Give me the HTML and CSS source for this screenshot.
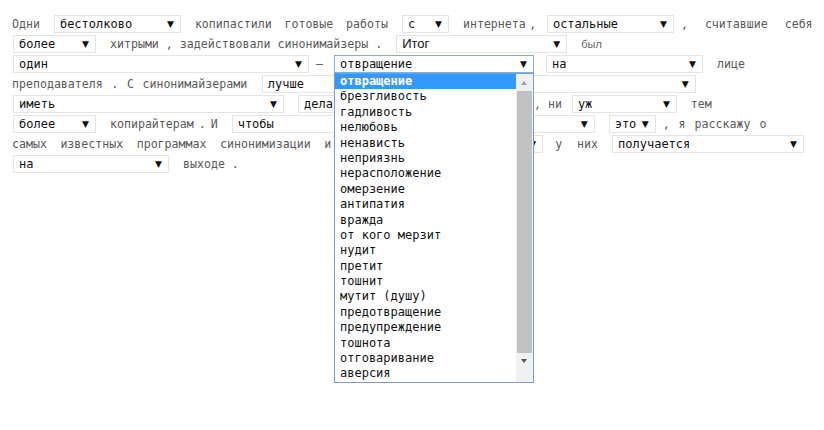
FILE: index.html
```html
<!DOCTYPE html>
<html lang="ru">
<head>
<meta charset="utf-8">
<title>Синонимайзеры</title>
<link rel="stylesheet" href="styles.css">
</head>
<body>
<div class="page">
  <div class="line">Одни <span class="sel w127"><span class="val">бестолково</span><span class="arr">▼</span></span> <span class="ws-wide">копипастили готовые работы</span> <span class="sel w47"><span class="val">с</span><span class="arr">▼</span></span> <span class="ws-narrow">интернета , </span><span class="sel w127"><span class="val">остальные</span><span class="arr">▼</span></span><span class="ws-xwide">, считавшие себя</span></div>
  <div class="line"><span class="sel w83 first"><span class="val">более</span><span class="arr">▼</span></span> хитрыми , задействовали синонимайзеры . <span class="sel w171 arial"><span class="val">Итог</span><span class="arr">▼</span></span> <span class="small">был</span></div>
  <div class="line"><span class="sel w296 first"><span class="val">один</span><span class="arr">▼</span></span><span class="dash">–</span><span class="sel w200 focus"><span class="val">отвращение</span><span class="arr">▼</span></span><span class="sel w157 ml5"><span class="val">на</span><span class="arr">▼</span></span> лице</div>
  <div class="line ws-slight">преподавателя . С синонимайзерами <span class="sel w434 ml6"><span class="val">лучше</span><span class="arr">▼</span></span></div>
  <div class="line"><span class="sel w271 first"><span class="val">иметь</span><span class="arr">▼</span></span><span class="sel w222"><span class="val">дела</span><span class="arr">▼</span></span> , ни <span class="sel w105 ml3"><span class="val">уж</span><span class="arr">▼</span></span> тем</div>
  <div class="line"><span class="sel w83 first"><span class="val">более</span><span class="arr">▼</span></span> <span class="ws-tight">копирайтерам . И</span> <span class="sel w363"><span class="val">чтобы</span><span class="arr">▼</span></span><span class="sel w47"><span class="val">это</span><span class="arr">▼</span></span><span class="ws-mid">, я расскажу о</span></div>
  <div class="line ws-minus"><span class="ws-big">самых известных программах синонимизации и</span> <span class="sel w200"><span class="val"></span><span class="arr">▼</span></span> <span class="ws-gap">у них</span> <span class="sel w192 ml9"><span class="val">получается</span><span class="arr">▼</span></span></div>
  <div class="line"><span class="sel w156 first"><span class="val">на</span><span class="arr">▼</span></span> выходе .</div>

  <div class="dropdown">
    <ul class="options">
      <li class="opt selected">отвращение</li>
      <li class="opt">брезгливость</li>
      <li class="opt">гадливость</li>
      <li class="opt">нелюбовь</li>
      <li class="opt">ненависть</li>
      <li class="opt">неприязнь</li>
      <li class="opt">нерасположение</li>
      <li class="opt">омерзение</li>
      <li class="opt">антипатия</li>
      <li class="opt">вражда</li>
      <li class="opt">от кого мерзит</li>
      <li class="opt">нудит</li>
      <li class="opt">претит</li>
      <li class="opt">тошнит</li>
      <li class="opt">мутит (душу)</li>
      <li class="opt">предотвращение</li>
      <li class="opt">предупреждение</li>
      <li class="opt">тошнота</li>
      <li class="opt">отговаривание</li>
      <li class="opt">аверсия</li>
    </ul>
    <div class="scrollbar">
      <span class="sb-up"></span>
      <span class="sb-thumb"></span>
      <span class="sb-down"></span>
    </div>
  </div>
</div>
</body>
</html>
```

FILE: styles.css
```css
html, body {
  margin: 0;
  padding: 0;
  background: #ffffff;
}

.page {
  position: relative;
  box-sizing: border-box;
  height: 430px;
  padding: 14px 12px 0 12px;
  font-family: "DejaVu Sans Mono", "Liberation Mono", monospace;
  font-size: 11.6px;
  color: #5a5a5a;
}

.line {
  height: 20px;
  line-height: 20px;
  white-space: nowrap;
}

/* word spacing variations seen in the reference text */
.ws-wide { word-spacing: 5.8px; }
.ws-narrow { word-spacing: -3.4px; }
.ws-xwide { word-spacing: 10px; }
.ws-slight { word-spacing: 1.6px; }
.ws-tight { word-spacing: -2px; }
.ws-mid { word-spacing: 2px; }
.ws-minus { word-spacing: -2px; }
.ws-big { word-spacing: 6.5px; }
.ws-gap { word-spacing: 8px; }

.sel {
  display: inline-flex;
  align-items: center;
  justify-content: space-between;
  box-sizing: border-box;
  height: 18px;
  margin: 1px 7px;
  padding: 0 6px 0 5px;
  vertical-align: top;
  border: 1px solid #e4e4e4;
  background: #ffffff;
  color: #111111;
  font-size: 12px;
  line-height: 16px;
  word-spacing: 0;
  text-align: left;
}

.sel.first { margin-left: 1px; }
.sel.ml3 { margin-left: 3px; }
.sel.ml5 { margin-left: 5px; }
.sel.ml6 { margin-left: 6px; }
.sel.ml9 { margin-left: 9px; }

.sel.focus {
  border-color: #7eaee0;
}

.dash {
  margin-right: 4px;
}

.sel.arial .val {
  font-family: "Liberation Sans", Arial, sans-serif;
  font-size: 13px;
}

.arr {
  font-family: "DejaVu Sans", sans-serif;
  font-size: 9px;
  color: #111111;
}

.small {
  font-family: "Liberation Sans", Arial, sans-serif;
  font-size: 11px;
  color: #666666;
}

.w47 { width: 47px; }
.w83 { width: 83px; }
.w105 { width: 105px; }
.w127 { width: 127px; }
.w156 { width: 156px; }
.w157 { width: 157px; }
.w171 { width: 171px; }
.w192 { width: 192px; }
.w200 { width: 200px; }
.w222 { width: 222px; }
.w271 { width: 271px; }
.w296 { width: 296px; }
.w363 { width: 363px; }
.w434 { width: 434px; }

.dropdown {
  position: absolute;
  left: 334px;
  top: 73px;
  width: 200px;
  height: 310px;
  box-sizing: border-box;
  border: 1px solid #7a9cc8;
  background: #ffffff;
  display: flex;
}

.options {
  list-style: none;
  margin: 0;
  padding: 0;
  flex: 1;
}

.opt {
  height: 15.4px;
  line-height: 15.4px;
  padding-left: 5px;
  color: #111111;
  font-size: 12px;
  white-space: nowrap;
}

.opt.selected {
  background: #3399ff;
  color: #ffffff;
  font-weight: bold;
  margin-right: -1px;
}

.scrollbar {
  width: 17px;
  background: #f0f0f0;
  display: flex;
  flex-direction: column;
  align-items: center;
}

.sb-up, .sb-down {
  height: 17px;
  width: 17px;
  position: relative;
}

.sb-up::after, .sb-down::after {
  content: "";
  position: absolute;
  left: 5px;
  width: 0;
  height: 0;
  border-left: 3.5px solid transparent;
  border-right: 3.5px solid transparent;
}

.sb-up::after {
  top: 7px;
  border-bottom: 4px solid #a3a3a3;
}

.sb-down::after {
  top: 6px;
  border-top: 4px solid #505050;
}

.sb-thumb {
  width: 15px;
  height: 262px;
  background: #c1c1c1;
}
```
